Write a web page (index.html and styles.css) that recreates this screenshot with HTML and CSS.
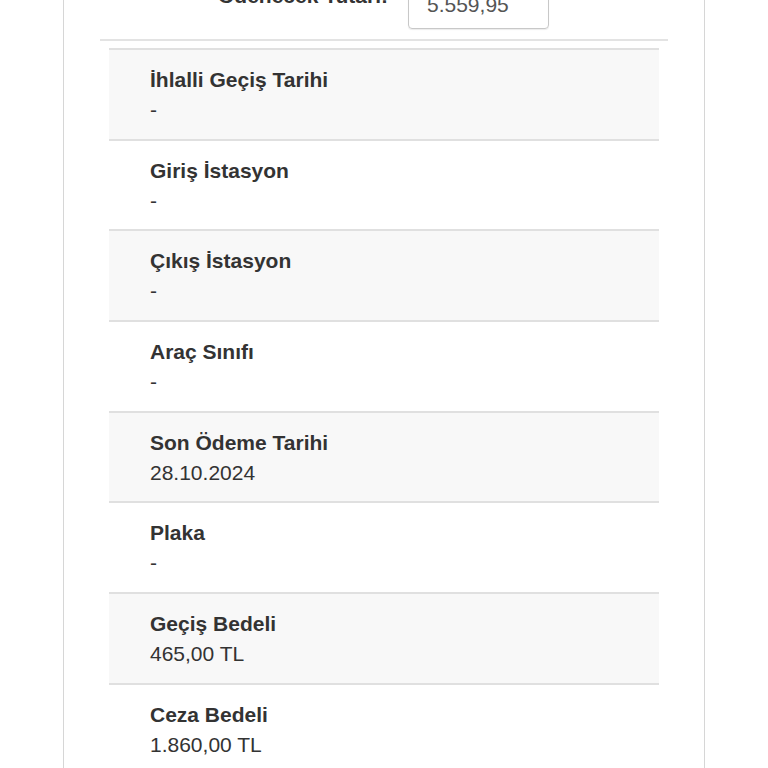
FILE: index.html
```html
<!DOCTYPE html>
<html lang="tr">
<head>
<meta charset="utf-8">
<title>Ödeme Detayı</title>
<link rel="stylesheet" href="styles.css">
</head>
<body>
<div class="page">
  <div class="card">
    <div class="pay-row">
      <label class="pay-label">Ödenecek Tutarı:</label>
      <div class="pay-input">5.559,95</div>
    </div>
    <hr class="divider">
    <div class="list">
      <div class="item striped"><div class="label">İhlalli Geçiş Tarihi</div><div class="value">-</div></div>
      <div class="item"><div class="label">Giriş İstasyon</div><div class="value">-</div></div>
      <div class="item striped"><div class="label">Çıkış İstasyon</div><div class="value">-</div></div>
      <div class="item"><div class="label">Araç Sınıfı</div><div class="value">-</div></div>
      <div class="item striped"><div class="label">Son Ödeme Tarihi</div><div class="value">28.10.2024</div></div>
      <div class="item"><div class="label">Plaka</div><div class="value">-</div></div>
      <div class="item striped"><div class="label">Geçiş Bedeli</div><div class="value">465,00 TL</div></div>
      <div class="item"><div class="label">Ceza Bedeli</div><div class="value">1.860,00 TL</div></div>
    </div>
  </div>
</div>
</body>
</html>
```
FILE: styles.css
```css
html, body {
  margin: 0;
  padding: 0;
  background: #fff;
}
body {
  font-family: "Liberation Sans", Arial, Helvetica, sans-serif;
  color: #333;
  font-size: 21px;
  line-height: 30px;
  overflow: hidden;
}
.page {
  margin-top: -30px;
}
.card {
  margin-left: 63px;
  width: 642px;
  box-sizing: border-box;
  border-left: 1px solid #d6d6d6;
  border-right: 1px solid #d6d6d6;
  padding: 11px 36px 40px 36px;
}
.pay-row {
  display: flex;
  align-items: flex-start;
  gap: 20px;
}
.pay-label {
  width: 288px;
  text-align: right;
  font-weight: bold;
}
.pay-input {
  width: 141px;
  height: 48px;
  box-sizing: border-box;
  border: 1px solid #c8c8c8;
  border-radius: 4px;
  padding: 8px 18px;
  color: #555;
  box-shadow: inset 0 1px 1px rgba(0,0,0,0.06), 0 1px 1px rgba(0,0,0,0.08);
}
.divider {
  margin: 10px 0 7px;
  border: 0;
  height: 2px;
  background: #e3e3e3;
}
.list {
  margin: 0 9px;
}
.item {
  border-top: 2px solid #e0e0e0;
  padding: 15px 41px 13.7px;
}
.item.striped {
  background: #f8f8f8;
}
.label {
  font-weight: bold;
}
```
